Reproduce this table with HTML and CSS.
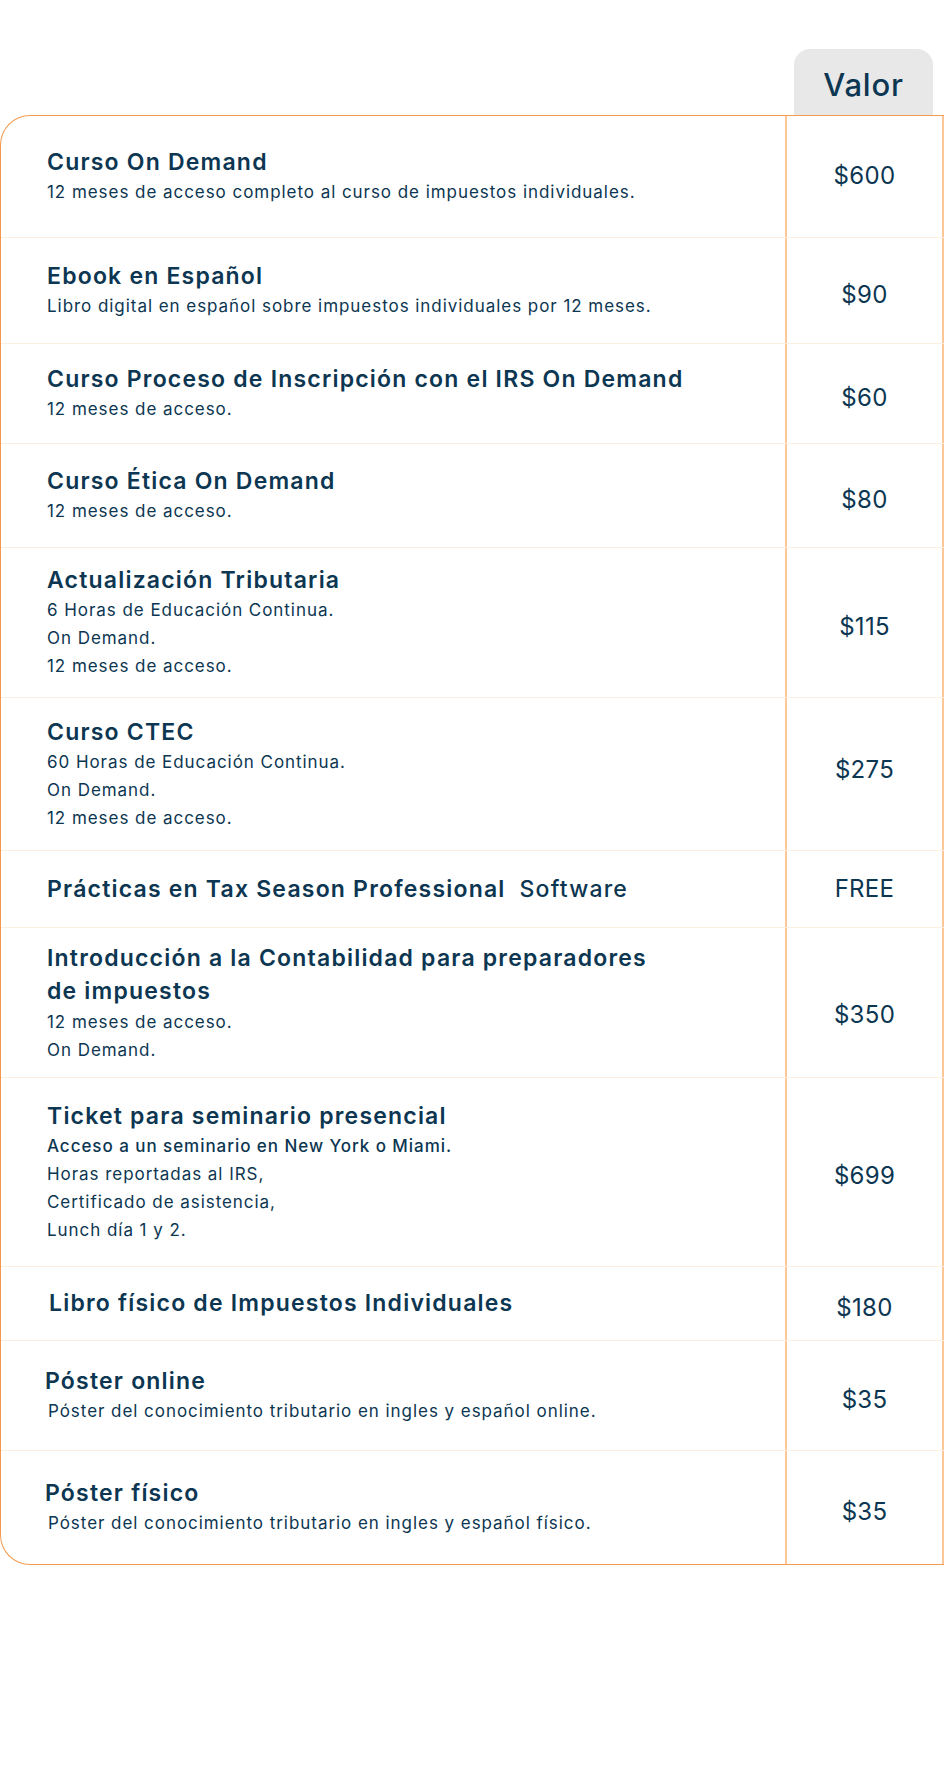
FILE: index.html
```html
<!DOCTYPE html>
<html lang="es">
<head>
    <meta charset="UTF-8">
    <title>Valor - Cursos y Materiales</title>
    <link rel="stylesheet" href="styles.css">
</head>
<body>
    <div class="pricing">
        <!-- Column header tab -->
        <div class="pricing-head">
            <div class="head-tab">Valor</div>
        </div>

        <div class="pricing-table">
            <div class="row">
                <div class="item">
                    <h3 class="item-title">Curso On Demand</h3>
                    <p class="item-desc">12 meses de acceso completo al curso de impuestos individuales.</p>
                </div>
                <div class="price price--mid">$600</div>
            </div>

            <div class="row">
                <div class="item">
                    <h3 class="item-title">Ebook en Español</h3>
                    <p class="item-desc">Libro digital en español sobre impuestos individuales por 12 meses.</p>
                </div>
                <div class="price">$90</div>
            </div>

            <div class="row">
                <div class="item">
                    <h3 class="item-title">Curso Proceso de Inscripción con el IRS On Demand</h3>
                    <p class="item-desc">12 meses de acceso.</p>
                </div>
                <div class="price">$60</div>
            </div>

            <div class="row">
                <div class="item">
                    <h3 class="item-title">Curso Ética On Demand</h3>
                    <p class="item-desc">12 meses de acceso.</p>
                </div>
                <div class="price">$80</div>
            </div>

            <div class="row">
                <div class="item">
                    <h3 class="item-title">Actualización Tributaria</h3>
                    <p class="item-desc">6 Horas de Educación Continua.</p>
                    <p class="item-desc">On Demand.</p>
                    <p class="item-desc">12 meses de acceso.</p>
                </div>
                <div class="price">$115</div>
            </div>

            <div class="row">
                <div class="item">
                    <h3 class="item-title">Curso CTEC</h3>
                    <p class="item-desc">60 Horas de Educación Continua.</p>
                    <p class="item-desc">On Demand.</p>
                    <p class="item-desc">12 meses de acceso.</p>
                </div>
                <div class="price price--high">$275</div>
            </div>

            <div class="row">
                <div class="item">
                    <h3 class="item-title">Prácticas en Tax Season Professional&nbsp; <span class="item-title--light">Software</span></h3>
                </div>
                <div class="price price--mid">FREE</div>
            </div>

            <div class="row">
                <div class="item">
                    <h3 class="item-title item-title--wrap">Introducción a la Contabilidad para preparadores<br>de impuestos</h3>
                    <p class="item-desc">12 meses de acceso.</p>
                    <p class="item-desc">On Demand.</p>
                </div>
                <div class="price price--low">$350</div>
            </div>

            <div class="row">
                <div class="item">
                    <h3 class="item-title">Ticket para seminario presencial</h3>
                    <p class="item-desc item-desc--strong">Acceso a un seminario en New York o Miami.</p>
                    <p class="item-desc">Horas reportadas al IRS,</p>
                    <p class="item-desc">Certificado de asistencia,</p>
                    <p class="item-desc">Lunch día 1 y 2.</p>
                </div>
                <div class="price">$699</div>
            </div>

            <div class="row">
                <div class="item item--shift">
                    <h3 class="item-title">Libro físico de Impuestos Individuales</h3>
                </div>
                <div class="price">$180</div>
            </div>

            <div class="row">
                <div class="item item--poster">
                    <h3 class="item-title">Póster online</h3>
                    <p class="item-desc">Póster del conocimiento tributario en ingles y español online.</p>
                </div>
                <div class="price">$35</div>
            </div>

            <div class="row">
                <div class="item item--poster">
                    <h3 class="item-title">Póster físico</h3>
                    <p class="item-desc">Póster del conocimiento tributario en ingles y español físico.</p>
                </div>
                <div class="price">$35</div>
            </div>
        </div>
    </div>
</body>
</html>
```

FILE: styles.css
```css
/* Basic Reset */
html,
body {
    margin: 0;
    padding: 0;
    background-color: #ffffff;
    color: #0c3651;
    font-family: 'Inter', 'Liberation Sans', sans-serif;
}

* {
    box-sizing: border-box;
}

/* Wrapper */
.pricing {
    width: 944px;
    padding-top: 49px;
}

/* Header tab */
.pricing-head {
    display: flex;
    justify-content: flex-end;
    padding-right: 11px;
}

.head-tab {
    width: 139px;
    height: 66px;
    background-color: #e8e8e8;
    border-radius: 16px 16px 0 0;
    display: flex;
    align-items: center;
    justify-content: center;
    font-size: 31px;
    font-weight: 500;
    letter-spacing: 0.8px;
    padding-top: 4px;
}

/* Table */
.pricing-table {
    border: 1px solid #f39a4e;
    border-right: none;
    border-radius: 30px 0 0 30px;
    display: grid;
    grid-template-rows: 122px 106px 100px 104px 150px 153px 77px 150px 189px 74px 110px 113px;
}

.row {
    display: grid;
    grid-template-columns: 784px 1fr;
    border-bottom: 1px solid #fdeee2;
}

.row:last-child {
    border-bottom: none;
}

/* Left column */
.item {
    display: flex;
    flex-direction: column;
    justify-content: center;
    padding-left: 46px;
}

.item--shift {
    padding-left: 48px;
}

.item--poster {
    padding-left: 44px;
}

.item-title {
    margin: 0;
    font-size: 23px;
    font-weight: 600;
    line-height: 31px;
    letter-spacing: 1.2px;
}

.item-title--light {
    font-weight: 500;
}

.item-title--wrap {
    line-height: 33px;
}

.item-desc {
    margin: 0;
    font-size: 17px;
    line-height: 28px;
    letter-spacing: 0.95px;
}

.item--poster .item-desc {
    padding-left: 3px;
}

.item-desc--strong {
    font-weight: 500;
}

/* Right column */
.price {
    border-left: 2px solid #fdc697;
    border-right: 2px solid #fdc697;
    display: flex;
    align-items: center;
    justify-content: center;
    font-size: 24px;
    font-weight: 400;
    letter-spacing: 0.3px;
    padding-top: 7px;
}

.price--mid {
    padding-top: 0;
    padding-bottom: 2px;
}

.price--low {
    padding-top: 24px;
}

.price--high {
    padding-top: 0;
    padding-bottom: 10px;
}
```
